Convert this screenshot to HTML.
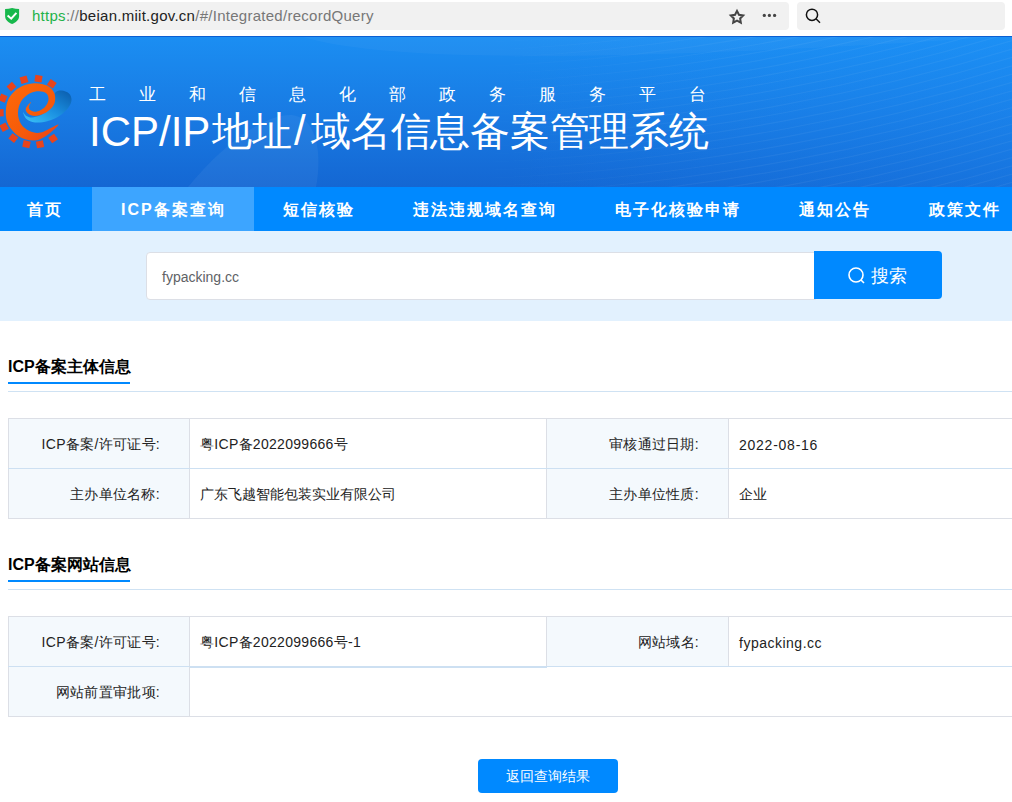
<!DOCTYPE html>
<html><head><meta charset="utf-8">
<style>
*{margin:0;padding:0;box-sizing:border-box}
html,body{width:1012px;height:802px;overflow:hidden;background:#fff;font-family:"Liberation Sans",sans-serif}
.abs{position:absolute}
#chrome{position:absolute;left:0;top:0;width:1012px;height:36px;background:#fff}
#addr{position:absolute;left:0;top:2px;width:789px;height:28px;background:#f1f1f1;border-radius:0 4px 4px 0}
#srch{position:absolute;left:797px;top:2px;width:208px;height:28px;background:#f1f1f1;border-radius:4px}
#url{position:absolute;left:32px;top:6px;font-size:15px;line-height:20px;letter-spacing:0.27px;color:#777;white-space:nowrap}
#url .g{color:#1fb34a}#url .d{color:#222}
#hdr{position:absolute;left:0;top:36px;width:1012px;height:151px;border-top:1px solid #0b5fd2;background:linear-gradient(90deg,rgba(0,0,0,0) 50%,rgba(30,150,255,0.25) 100%),linear-gradient(180deg,#1b8ef2 0%,#1879e2 55%,#1467d3 100%);overflow:hidden}
#sub{position:absolute;left:89px;top:48px;font-size:17px;line-height:20px;color:#fff;white-space:nowrap}
#sub span{position:absolute;top:0}
#title{position:absolute;left:91px;top:68px;font-size:40px;line-height:50px;color:#fff;white-space:nowrap}
#title span{position:absolute}
#nav{position:absolute;left:0;top:187px;width:1012px;height:44px;background:#0089ff}
#nav .act{position:absolute;left:92px;top:0;width:162px;height:44px;background:#3da5ff}
#nav span{position:absolute;top:13px;font-size:16px;line-height:20px;font-weight:900;letter-spacing:2px;color:#fff;white-space:nowrap}
#sbar{position:absolute;left:0;top:231px;width:1012px;height:90px;background:#e2f1fe}
#inp{position:absolute;left:146px;top:252px;width:670px;height:48px;background:#fff;border:1px solid #dcdfe6;border-radius:4px 0 0 4px}
#inp span{position:absolute;left:15px;top:15px;font-size:14px;line-height:18px;color:#606266}
#btn{position:absolute;left:814px;top:251px;width:128px;height:48px;background:#0089ff;border-radius:0 4px 4px 0}
#btn span{position:absolute;left:57px;top:14px;font-size:18px;line-height:22px;color:#fff}
.sec{position:absolute;left:8px;font-size:16px;font-weight:bold;line-height:20px;color:#000;white-space:nowrap}
.uline{position:absolute;left:8px;width:122px;height:2px;background:#0089ff}
.hline{position:absolute;left:8px;width:1004px;height:1px;background:#cfe2f3}
table{position:absolute;left:8px;border-collapse:collapse;table-layout:fixed;width:1077px}
td{height:50px;border:1px solid #dcdfe6;font-size:14px;color:#222;padding:2px 10px 0;letter-spacing:0.3px;white-space:nowrap}
td.l{background:#f4f9fd;text-align:right;padding-right:29px}
tr:first-child td{border-bottom-color:#cde0f2}
#back{position:absolute;left:478px;top:759px;width:140px;height:34px;background:#0089ff;border-radius:4px;color:#fff;font-size:14px;line-height:34px;text-align:center}
</style></head><body>
<div id="chrome">
  <div id="addr"></div>
  <svg class="abs" style="left:5px;top:8px" width="15" height="17" viewBox="0 0 15 17"><path d="M0.1 1 Q 3.6 1 7.1 0 Q 10.6 1 14.1 1 V 8.2 C 14.1 12 10.6 14.6 7.1 16 C 3.6 14.6 0.1 12 0.1 8.2 Z" fill="#17b84c"/><path d="M2.6 7.6 L6.2 10.7 L11.4 4.8" fill="none" stroke="#fff" stroke-width="2"/></svg>
  <div id="url"><span class="g">https</span>://<span class="d">beian.miit.gov.cn</span>/#/Integrated/recordQuery</div>
  <svg class="abs" style="left:727px;top:7px" width="20" height="20" viewBox="0 0 20 20"><path d="M10.00 3.90 L11.94 7.73 L16.18 8.39 L13.14 11.42 L13.82 15.66 L10.00 13.70 L6.18 15.66 L6.86 11.42 L3.82 8.39 L8.06 7.73 Z" fill="none" stroke="#444" stroke-width="2" stroke-linejoin="miter"/></svg>
  <svg class="abs" style="left:760px;top:12px" width="18" height="7" viewBox="0 0 18 7"><circle cx="4.3" cy="3.4" r="1.6" fill="#444"/><circle cx="9.4" cy="3.4" r="1.6" fill="#444"/><circle cx="14.6" cy="3.4" r="1.6" fill="#444"/></svg>
  <div id="srch"></div>
  <svg class="abs" style="left:804px;top:6px" width="18" height="18" viewBox="0 0 18 18"><circle cx="8" cy="8.8" r="5.6" fill="none" stroke="#111" stroke-width="1.5"/><path d="M12 12.8 L16 16.8" stroke="#111" stroke-width="1.5"/></svg>
</div>
<div id="hdr">
  <svg class="abs" style="left:0;top:-1px" width="1012" height="151" viewBox="0 0 1012 151"><path d="M188 151 C 220 112 262 78 292 79 C 318 82 322 120 316 151 Z" fill="#fff" fill-opacity="0.05"/><path d="M300 0 Q 420 40 1012 0 Z" fill="#fff" fill-opacity="0.03"/><defs><linearGradient id="wm" x1="0" y1="0" x2="1" y2="0"><stop offset="0.45" stop-color="#fff" stop-opacity="0"/><stop offset="0.75" stop-color="#fff" stop-opacity="1"/></linearGradient><mask id="wmask"><rect x="0" y="0" width="1012" height="151" fill="url(#wm)"/></mask></defs><g fill="none" stroke="#fff" stroke-opacity="0.05" stroke-width="1.2" mask="url(#wmask)"><circle cx="400" cy="-2000" r="2000"/><circle cx="400" cy="-2000" r="2008"/><circle cx="400" cy="-2000" r="2016"/><circle cx="400" cy="-2000" r="2024"/><circle cx="400" cy="-2000" r="2032"/><circle cx="400" cy="-2000" r="2040"/><circle cx="400" cy="-2000" r="2048"/><circle cx="400" cy="-2000" r="2056"/><circle cx="400" cy="-2000" r="2064"/><circle cx="400" cy="-2000" r="2072"/><circle cx="400" cy="-2000" r="2080"/><circle cx="400" cy="-2000" r="2088"/><circle cx="400" cy="-2000" r="2096"/><circle cx="400" cy="-2000" r="2104"/><circle cx="400" cy="-2000" r="2112"/><circle cx="400" cy="-2000" r="2120"/><circle cx="400" cy="-2000" r="2128"/><circle cx="400" cy="-2000" r="2136"/><circle cx="400" cy="-2000" r="2144"/><circle cx="400" cy="-2000" r="2152"/><circle cx="400" cy="-2000" r="2160"/><circle cx="400" cy="-2000" r="2168"/><circle cx="400" cy="-2000" r="2176"/><circle cx="400" cy="-2000" r="2184"/><circle cx="400" cy="-2000" r="2192"/><circle cx="400" cy="-2000" r="2200"/><circle cx="400" cy="-2000" r="2208"/><circle cx="400" cy="-2000" r="2216"/><circle cx="400" cy="-2000" r="2224"/><circle cx="400" cy="-2000" r="2232"/><circle cx="400" cy="-2000" r="2240"/><circle cx="400" cy="-2000" r="2248"/></g></svg>
  <div id="sub"><span style="left:0px">工</span><span style="left:50px">业</span><span style="left:100px">和</span><span style="left:150px">信</span><span style="left:200px">息</span><span style="left:250px">化</span><span style="left:300px">部</span><span style="left:350px">政</span><span style="left:400px">务</span><span style="left:450px">服</span><span style="left:500px">务</span><span style="left:550px">平</span><span style="left:600px">台</span></div>
  <div id="title"><span style="left:-2px;top:2px;font-size:42px">ICP/IP</span><span style="left:121px;top:1px">地址</span><span style="left:203px;top:1px;font-size:42px">/</span><span style="left:220px;top:1px;letter-spacing:-0.25px">域名信息备案管理系统</span></div>
  <svg class="abs" style="left:0;top:33px" width="80" height="82" viewBox="0 -6 80 82"><defs><linearGradient id="og" x1="0" y1="0" x2="1" y2="1"><stop offset="0" stop-color="#ff6a08"/><stop offset="0.6" stop-color="#f55a0a"/><stop offset="1" stop-color="#e8401a"/></linearGradient><linearGradient id="sg" x1="0" y1="1" x2="1" y2="0"><stop offset="0" stop-color="#3cc4f8"/><stop offset="0.5" stop-color="#1a8fe0"/><stop offset="1" stop-color="#0a5aaa"/></linearGradient></defs><g fill="#e8441c"><rect x="-3.6" y="-3.4" width="7.2" height="6.8" transform="translate(51.8 7.8) rotate(33.4)"/><rect x="-3.6" y="-3.4" width="7.2" height="6.8" transform="translate(38.5 2.7) rotate(8.7)"/><rect x="-3.6" y="-3.4" width="7.2" height="6.8" transform="translate(24.0 3.7) rotate(-16.6)"/><rect x="-3.6" y="-3.4" width="7.2" height="6.8" transform="translate(11.5 10.6) rotate(-41.3)"/><rect x="-3.6" y="-3.4" width="7.2" height="6.8" transform="translate(3.0 22.2) rotate(-66.2)"/><rect x="-3.6" y="-3.4" width="7.2" height="6.8" transform="translate(0.2 36.8) rotate(268.0)"/><rect x="-3.6" y="-3.4" width="7.2" height="6.8" transform="translate(4.1 51.2) rotate(242.1)"/><rect x="-3.6" y="-3.4" width="7.2" height="6.8" transform="translate(13.3 62.1) rotate(217.4)"/><rect x="-3.6" y="-3.4" width="7.2" height="6.8" transform="translate(26.5 68.2) rotate(192.1)"/><rect x="-3.6" y="-3.4" width="7.2" height="6.8" transform="translate(40.0 68.3) rotate(168.7)"/><rect x="-3.6" y="-3.4" width="7.2" height="6.8" transform="translate(53.1 62.5) rotate(144.0)"/></g><path d="M23.0 36.0 C23.0 36.5 24.5 41.2 26.5 43.0 C28.5 44.8 31.4 46.2 35.0 46.5 C38.6 46.8 43.8 46.2 48.0 45.0 C52.2 43.8 56.6 41.8 60.0 39.5 C63.4 37.2 66.6 34.1 68.5 31.5 C70.4 28.9 71.4 26.3 71.5 24.0 C71.6 21.7 70.7 19.1 69.0 17.5 C67.3 15.9 63.8 14.6 61.5 14.5 C59.2 14.4 56.4 14.9 55.0 17.0 C53.6 19.1 54.3 24.0 53.0 27.0 C51.7 30.0 49.2 32.9 47.0 35.0 C44.8 37.1 42.5 38.4 40.0 39.5 C37.5 40.6 34.2 41.4 32.0 41.5 C29.8 41.6 28.0 40.9 26.5 40.0 C25.0 39.1 23.0 35.5 23.0 36.0 Z" fill="url(#sg)"/><path d="M58.5 48.5 C59.3 49.1 50.1 57.3 46.0 60.0 C41.9 62.7 38.5 64.5 34.0 64.6 C29.5 64.7 23.2 63.1 19.0 60.5 C14.8 57.9 10.7 53.1 8.5 49.0 C6.3 44.9 5.7 40.5 5.8 36.0 C5.9 31.5 6.7 26.1 9.0 22.0 C11.3 17.9 15.3 14.0 19.5 11.5 C23.7 9.0 29.4 7.5 34.0 7.2 C38.6 6.9 43.7 8.0 47.0 9.5 C50.3 11.1 52.7 13.9 54.0 16.5 C55.3 19.1 55.4 22.4 55.0 25.0 C54.6 27.6 53.3 29.9 51.5 32.0 C49.7 34.1 46.8 36.2 44.0 37.5 C41.2 38.8 37.7 40.0 35.0 40.0 C32.3 40.0 29.5 38.8 28.0 37.5 C26.5 36.2 25.3 34.4 25.8 32.5 C26.3 30.6 30.5 26.2 31.0 26.0 C31.5 25.8 28.7 30.0 28.8 31.5 C28.9 33.0 30.1 34.1 31.5 34.8 C32.9 35.5 34.8 36.0 37.0 35.5 C39.2 35.0 42.6 33.4 44.5 31.5 C46.4 29.6 48.2 26.3 48.5 24.0 C48.8 21.7 48.1 19.0 46.5 17.5 C44.9 16.0 41.8 15.2 39.0 15.2 C36.2 15.2 32.5 15.8 29.5 17.5 C26.5 19.2 22.9 22.2 21.0 25.5 C19.1 28.8 18.0 33.2 18.0 37.0 C18.0 40.8 19.1 45.0 21.0 48.0 C22.9 51.0 26.2 53.6 29.5 55.0 C32.8 56.4 36.2 57.6 41.0 56.5 C45.8 55.4 57.7 47.9 58.5 48.5 Z" fill="url(#og)"/></svg>
</div>
<div id="nav">
  <div class="act"></div>
  <span style="left:27px">首页</span>
  <span style="left:121px">ICP备案查询</span>
  <span style="left:283px">短信核验</span>
  <span style="left:413px">违法违规域名查询</span>
  <span style="left:615px">电子化核验申请</span>
  <span style="left:799px">通知公告</span>
  <span style="left:929px">政策文件</span>
</div>
<div id="sbar"></div>
<div id="inp"><span>fypacking.cc</span></div>
<div id="btn"><svg class="abs" style="left:33px;top:15px" width="20" height="20" viewBox="0 0 20 20"><circle cx="9" cy="9" r="7" fill="none" stroke="#fff" stroke-width="1.6"/><path d="M14 14 L17 17" stroke="#fff" stroke-width="1.6"/></svg><span>搜索</span></div>

<div class="sec" style="top:357px">ICP备案主体信息</div>
<div class="uline" style="top:382px"></div>
<div class="hline" style="top:391px"></div>
<table style="top:418px">
<colgroup><col style="width:181px"><col style="width:357px"><col style="width:182px"><col style="width:357px"></colgroup>
<tr><td class="l">ICP备案/许可证号:</td><td>粤ICP备2022099666号</td><td class="l">审核通过日期:</td><td style="letter-spacing:0.75px">2022-08-16</td></tr>
<tr><td class="l">主办单位名称:</td><td style="letter-spacing:0">广东飞越智能包装实业有限公司</td><td class="l">主办单位性质:</td><td>企业</td></tr>
</table>

<div class="sec" style="top:555px">ICP备案网站信息</div>
<div class="uline" style="top:580px"></div>
<div class="hline" style="top:589px"></div>
<table style="top:616px">
<colgroup><col style="width:181px"><col style="width:357px"><col style="width:182px"><col style="width:357px"></colgroup>
<tr><td class="l">ICP备案/许可证号:</td><td>粤ICP备2022099666号-1</td><td class="l">网站域名:</td><td style="letter-spacing:0.5px">fypacking.cc</td></tr>
<tr><td class="l">网站前置审批项:</td><td colspan="3"></td></tr>
</table>
<div class="abs" style="left:190px;top:667px;width:357px;height:1px;background:#cde0f2"></div>
<div id="back">返回查询结果</div>
</body></html>
